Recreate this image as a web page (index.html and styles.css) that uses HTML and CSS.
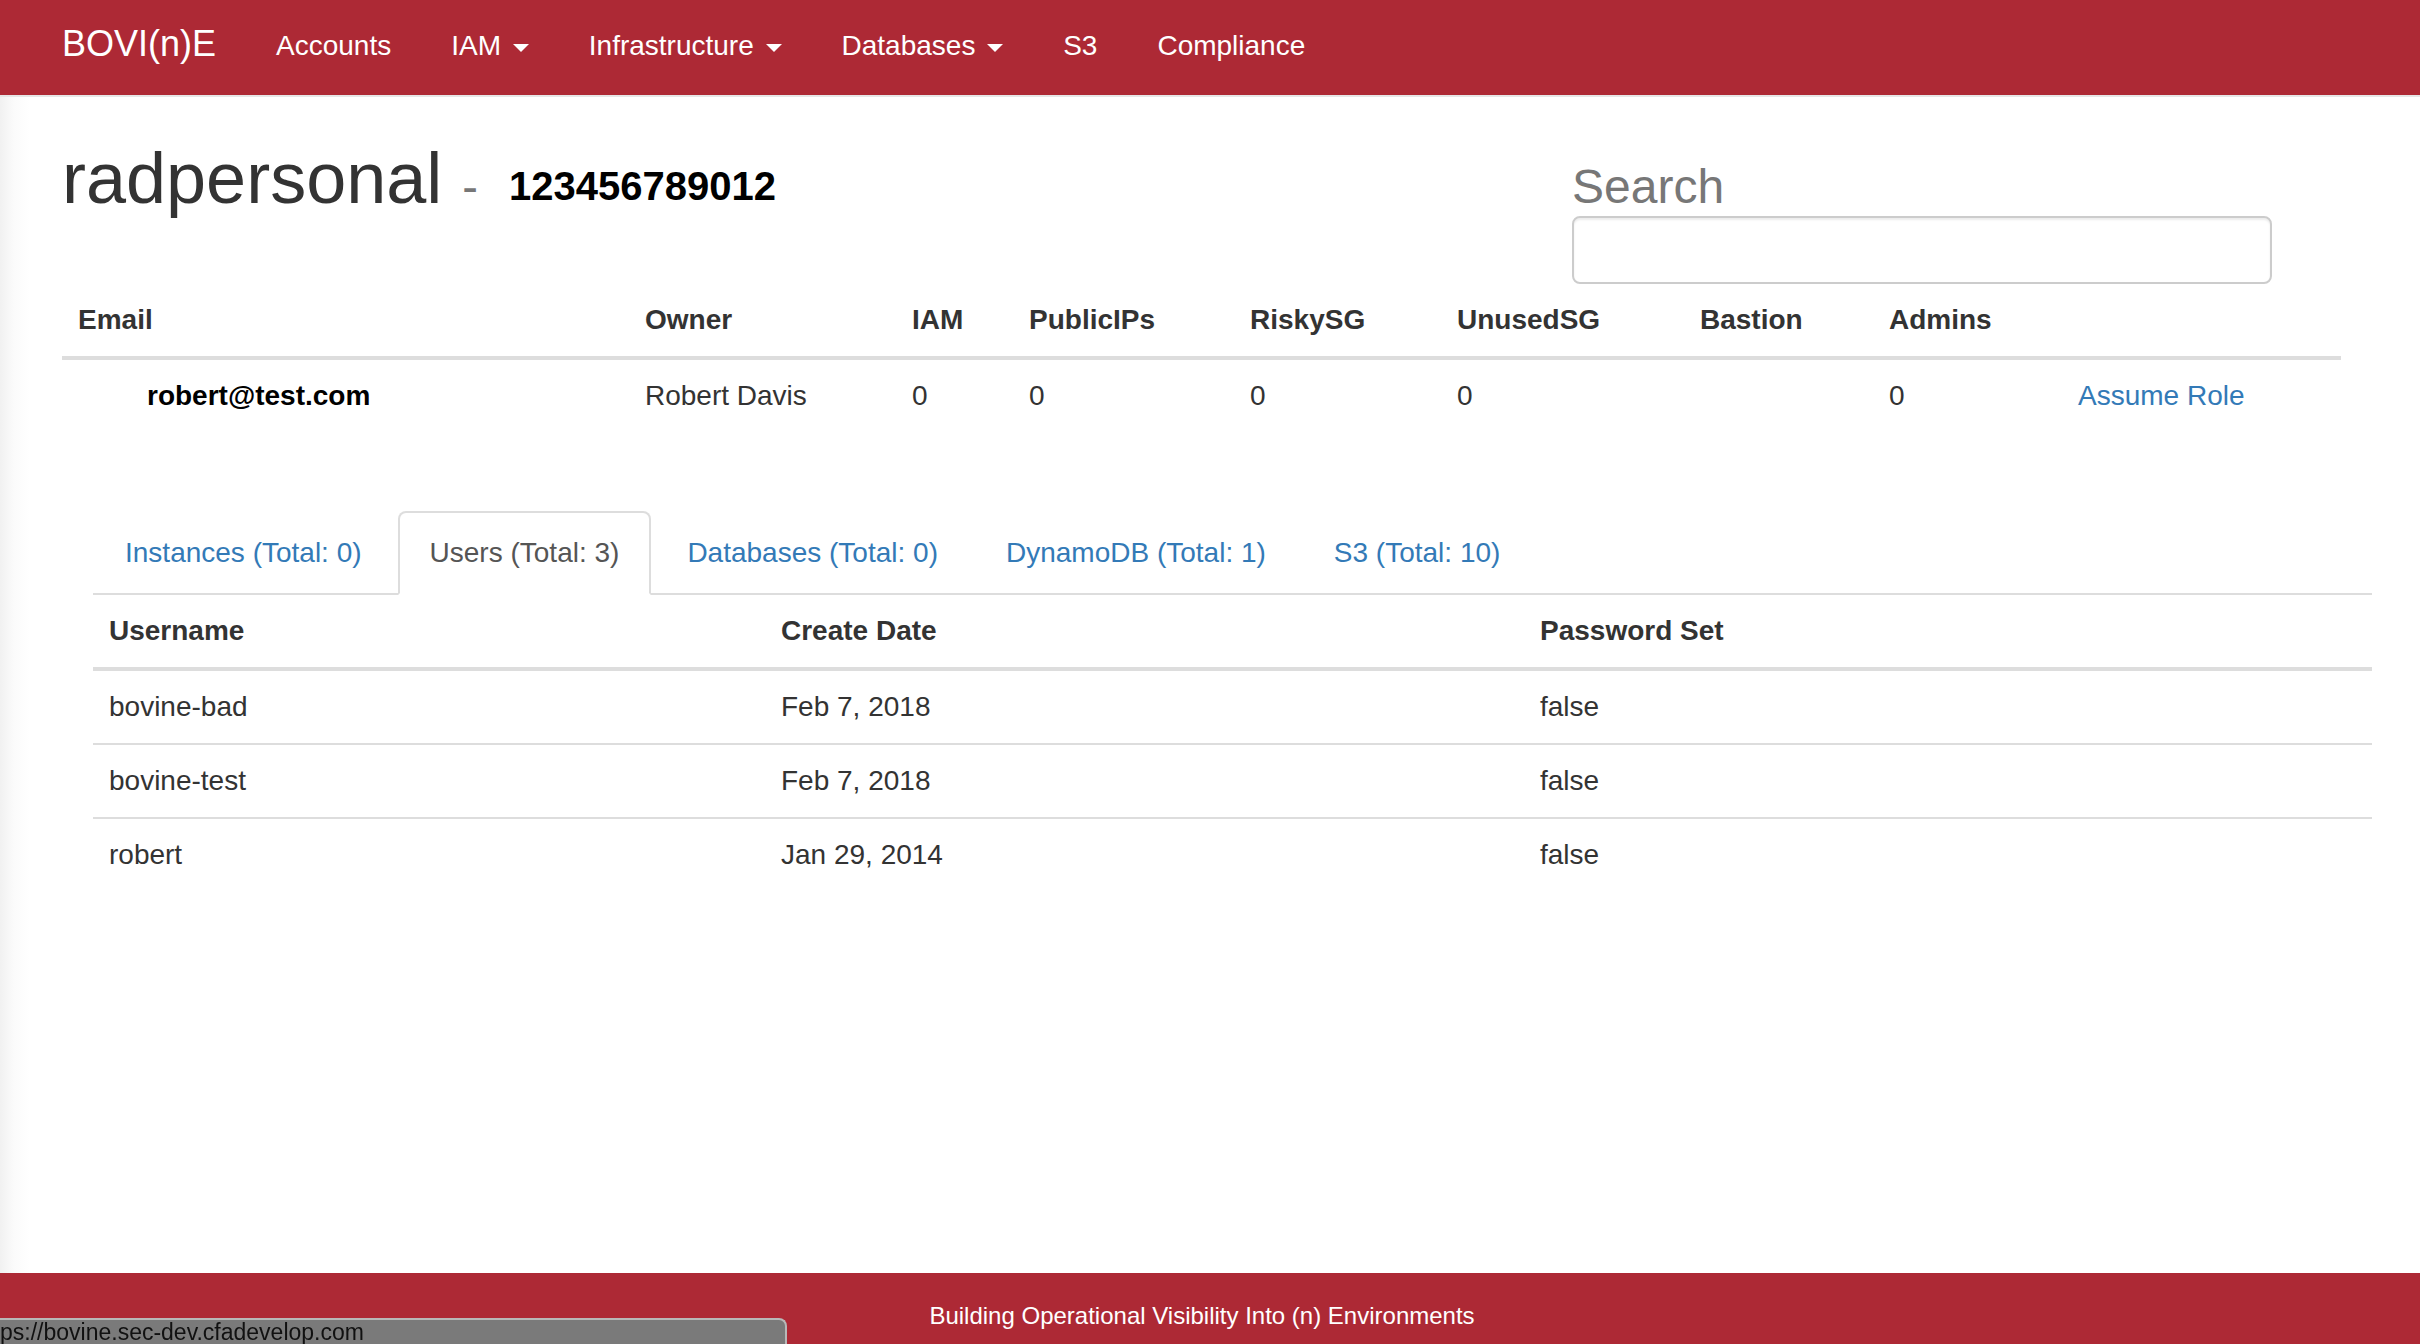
FILE: index.html
```html
<!DOCTYPE html>
<html lang="en">
<head>
<meta charset="utf-8">
<title>BOVI(n)E - radpersonal</title>
<link rel="stylesheet" href="styles.css">
</head>
<body>
<nav class="navbar">
  <a class="brand" href="#">BOVI(n)E</a>
  <ul class="nav-links">
    <li><a href="#">Accounts</a></li>
    <li><a href="#">IAM <span class="caret"></span></a></li>
    <li><a href="#">Infrastructure <span class="caret"></span></a></li>
    <li><a href="#">Databases <span class="caret"></span></a></li>
    <li><a href="#">S3</a></li>
    <li><a href="#">Compliance</a></li>
  </ul>
</nav>

<main class="page">
  <div class="content">
    <div class="head-row">
      <h1 class="title">radpersonal <small class="dash">- </small><span class="acct">123456789012</span></h1>
      <div class="search">
        <label class="search-label" for="q">Search</label>
        <input class="search-input" id="q" type="text">
      </div>
    </div>

    <table class="table acct-table">
      <colgroup>
        <col style="width:567px"><col style="width:267px"><col style="width:117px">
        <col style="width:221px"><col style="width:207px"><col style="width:243px">
        <col style="width:189px"><col style="width:189px"><col style="width:279px">
      </colgroup>
      <thead>
        <tr>
          <th>Email</th><th>Owner</th><th>IAM</th><th>PublicIPs</th><th>RiskySG</th>
          <th>UnusedSG</th><th>Bastion</th><th>Admins</th><th></th>
        </tr>
      </thead>
      <tbody>
        <tr>
          <td class="email">robert@test.com</td>
          <td>Robert Davis</td>
          <td>0</td>
          <td>0</td>
          <td>0</td>
          <td>0</td>
          <td></td>
          <td>0</td>
          <td><a class="link" href="#">Assume Role</a></td>
        </tr>
      </tbody>
    </table>

    <div class="tabs-wrap">
      <ul class="nav-tabs">
        <li><a href="#">Instances (Total: 0)</a></li>
        <li class="active"><a href="#">Users (Total: 3)</a></li>
        <li><a href="#">Databases (Total: 0)</a></li>
        <li><a href="#">DynamoDB (Total: 1)</a></li>
        <li><a href="#">S3 (Total: 10)</a></li>
      </ul>
      <table class="table users-table">
        <colgroup>
          <col style="width:672px"><col style="width:759px"><col style="width:848px">
        </colgroup>
        <thead>
          <tr><th>Username</th><th>Create Date</th><th>Password Set</th></tr>
        </thead>
        <tbody>
          <tr><td>bovine-bad</td><td>Feb 7, 2018</td><td>false</td></tr>
          <tr><td>bovine-test</td><td>Feb 7, 2018</td><td>false</td></tr>
          <tr><td>robert</td><td>Jan 29, 2014</td><td>false</td></tr>
        </tbody>
      </table>
    </div>
  </div>
</main>

<footer class="footer">Building Operational Visibility Into (n) Environments</footer>

<div class="statusbar">ps://bovine.sec-dev.cfadevelop.com</div>
</body>
</html>
```

FILE: styles.css
```css
* { box-sizing: border-box; }

html, body {
  margin: 0;
  padding: 0;
  height: 100%;
}

body {
  font-family: "Liberation Sans", Arial, Helvetica, sans-serif;
  font-size: 28px;
  line-height: 40px;
  color: #333;
  background: #fff;
  display: flex;
  flex-direction: column;
  height: 1344px;
  overflow: hidden;
}

a { text-decoration: none; }

/* ---------- navbar ---------- */
.navbar {
  flex: none;
  height: 97px;
  background: #ad2935;
  border-bottom: 2px solid #e6e6e6;
  display: flex;
  align-items: flex-start;
  padding-left: 32px;
}

.brand {
  color: #fff;
  font-size: 36px;
  line-height: 40px;
  padding: 24px 30px 0 30px;
}

.nav-links {
  list-style: none;
  margin: 0;
  padding: 0;
  display: flex;
}

.nav-links a {
  display: block;
  color: #fff;
  font-size: 28px;
  line-height: 40px;
  padding: 26px 30px 0 30px;
}

.caret {
  display: inline-block;
  width: 0;
  height: 0;
  margin-left: 4px;
  vertical-align: middle;
  border-top: 8px solid #fff;
  border-left: 8px solid transparent;
  border-right: 8px solid transparent;
}

/* ---------- page ---------- */
.page {
  flex: 1;
  background: linear-gradient(90deg, #f1f1f1 0, #fbfbfb 14px, #fff 30px);
}

.content {
  padding-left: 62px;
  width: 2342px;
}

.head-row {
  display: grid;
  grid-template-columns: 1510px 700px;
}

.title {
  margin: 41px 0 0 0;
  font-size: 72px;
  line-height: 80px;
  font-weight: normal;
  color: #333;
}

.dash {
  font-size: 47px;
  color: #777;
}

.acct {
  font-size: 40px;
  font-weight: bold;
  color: #000;
  margin-left: 18px;
  vertical-align: 3px;
}

.search {
  display: flex;
  flex-direction: column;
  padding-top: 62px;
}

.search-label {
  display: block;
  font-size: 48px;
  line-height: 56px;
  color: #777;
}

.search-input {
  margin-top: 1px;
  width: 700px;
  height: 68px;
  border: 2px solid #ccc;
  border-radius: 8px;
  box-shadow: inset 0 2px 2px rgba(0, 0, 0, 0.075);
  background: #fff;
  font: inherit;
  padding: 12px 24px;
}

/* ---------- tables ---------- */
.table {
  border-collapse: collapse;
  border-spacing: 0;
  table-layout: fixed;
  width: 2279px;
}

.table th,
.table td {
  padding: 16px;
  line-height: 40px;
  text-align: left;
  vertical-align: top;
  white-space: nowrap;
}

.table th {
  font-weight: bold;
  border-bottom: 4px solid #ddd;
}

.table td {
  border-top: 2px solid #ddd;
}

.acct-table .email {
  padding-left: 85px;
  font-weight: bold;
  color: #000;
}

.link { color: #337ab7; }

.acct-table {
  margin-bottom: 79px;
}

/* ---------- tabs ---------- */
.tabs-wrap {
  margin-left: 31px;
  width: 2279px;
}

.nav-tabs {
  list-style: none;
  margin: 0;
  padding: 0;
  display: flex;
  border-bottom: 2px solid #ddd;
}

.nav-tabs li {
  margin-right: 4px;
  margin-bottom: -2px;
}

.nav-tabs a {
  display: block;
  padding: 20px 30px;
  line-height: 40px;
  border: 2px solid transparent;
  border-radius: 8px 8px 0 0;
  color: #337ab7;
}

.nav-tabs .active a {
  color: #555;
  background: #fff;
  border-color: #ddd #ddd transparent #ddd;
}

/* ---------- footer ---------- */
.footer {
  flex: none;
  height: 71px;
  background: #ad2935;
  color: #fff;
  font-size: 24px;
  line-height: 34px;
  padding: 26px 16px 0 0;
  text-align: center;
}

.statusbar {
  position: fixed;
  left: 0;
  bottom: 0;
  width: 787px;
  height: 26px;
  background: #7a7a7a;
  border-top: 2px solid #b8b8b8;
  border-right: 2px solid #b8b8b8;
  border-top-right-radius: 8px;
  color: #111;
  font-family: "Liberation Sans", Arial, sans-serif;
  font-size: 23px;
  line-height: 24px;
  padding-top: 0;
  white-space: nowrap;
  overflow: hidden;
}
```
